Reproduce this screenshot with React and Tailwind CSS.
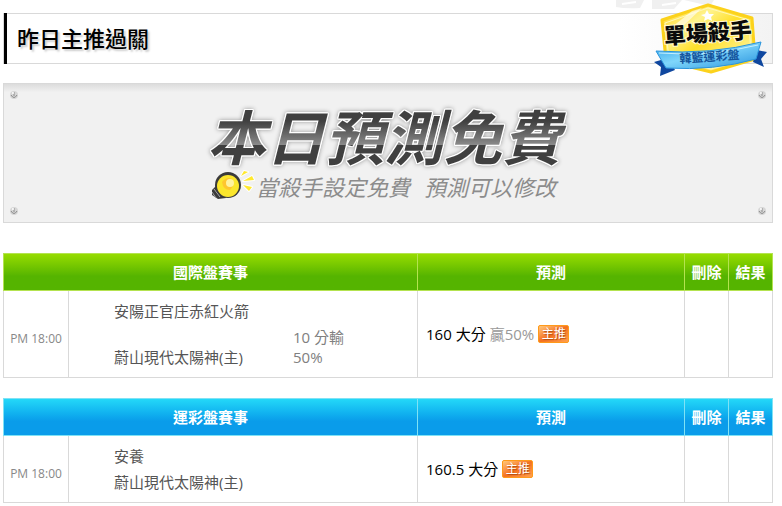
import React from 'react';
import clsx from 'clsx';

const games = [
  {
    id: 'international',
    title: '國際盤賽事',
    theme: 'green',
    time: 'PM 18:00',
    away: '安陽正官庄赤紅火箭',
    home: '蔚山現代太陽神(主)',
    odds: ['10 分輸', '50%'],
    pick: '160 大分',
    rate: '贏50%',
  },
  {
    id: 'lottery',
    title: '運彩盤賽事',
    theme: 'blue',
    time: 'PM 18:00',
    away: '安養',
    home: '蔚山現代太陽神(主)',
    odds: [],
    pick: '160.5 大分',
    rate: '',
  },
];

const headThemes = {
  green: 'bg-linear-to-b from-[#96dc00] via-[#55b400] via-60% to-[#55b400]',
  blue: 'bg-linear-to-b from-[#24d8f8] via-[#0a9cea] via-60% to-[#0a9cea]',
};

const borderThemes = {
  green: 'border-[#b4e350]',
  blue: 'border-[#7fe2f5]',
};

const KillerBadge = () => (
  <svg className="w-[114px] h-[76px]" viewBox="0 0 114 76" role="img" aria-label="單場殺手 韓籃運彩盤">
    <defs>
      <linearGradient id="gold" x1="0" y1="0" x2="1" y2="1">
        <stop offset="0" stopColor="#ffd21a" />
        <stop offset="0.3" stopColor="#fff38c" />
        <stop offset="0.5" stopColor="#ffe02a" />
        <stop offset="0.8" stopColor="#fff08a" />
        <stop offset="1" stopColor="#f5bd00" />
      </linearGradient>
      <linearGradient id="ribbon" x1="0" y1="0" x2="1" y2="1">
        <stop offset="0" stopColor="#2f9fe4" />
        <stop offset="0.45" stopColor="#7fd6fb" />
        <stop offset="1" stopColor="#2590dc" />
      </linearGradient>
    </defs>
    <path d="M54 4 L98 17 L101 58 L57 71 L12 60 L8 19 Z" fill="url(#gold)" stroke="#fcd21c" strokeWidth="3" strokeLinejoin="round" />
    <path d="M54 7 L95 19 L97 56 L57 68 L15 58 L11 22 Z" fill="none" stroke="#fff8b8" strokeWidth="1" />
    <path d="M38 10 L48 7 L24 30 L13 30 Z" fill="#fff" opacity="0.6" />
    <path d="M53 9 L55 13 L60 13 L57 16 L58 20 L54 18 L50 20 L51 16 L47 14 L51 13 Z" fill="#fff" />
    <path d="M0 61 L14 57 L21 69 L6 75 L7 66 Z" fill="#0f479f" />
    <path d="M113 51 L103 49 L99 61 L110 66 L107 58 Z" fill="#0f479f" />
    <path d="M2 50 Q56 54 107 41 L102 58 Q60 70 12 67 Z" fill="url(#ribbon)" stroke="#2a94dc" strokeWidth="1" />
    <path d="M5 52 Q56 56 104 44" fill="none" stroke="#c5efff" strokeWidth="1" />
    <g transform="rotate(-4 55 35)" textAnchor="middle" fontFamily="'Noto Sans CJK TC', sans-serif">
      <text x="54" y="40" fontSize="22" fontWeight="900" fill="#0a0a0a" stroke="#fff9d0" strokeWidth="2" paintOrder="stroke">
        單場殺手
      </text>
      <text x="54" y="60" fontSize="12" fontWeight="700" fill="#14549c">
        韓籃運彩盤
      </text>
    </g>
  </svg>
);

const Bulb = () => (
  <svg className="w-11 h-[30px] shrink-0" viewBox="0 0 44 30" aria-hidden="true">
    <path d="M6 14 L0 20 L0 25 L6 29 L14 28 Z" fill="#3a3a3a" />
    <path d="M2 19 L8 27 M0 22 L4 28" stroke="#a8a8a8" strokeWidth="1" />
    <circle cx="16" cy="15" r="13" fill="#3a3a3a" />
    <circle cx="16" cy="16" r="11" fill="#fbe62c" />
    <path d="M10 12 Q15 6 20 9 Q24 14 18 20 Q11 20 10 12 Z" fill="#ffc62e" />
    <circle cx="18" cy="13" r="4" fill="#fff3a0" />
    <g fill="#ffe92e" stroke="#fff" strokeWidth="2" strokeLinejoin="round" paintOrder="stroke">
      <path d="M29 6 L32 1 L36 2 Z" />
      <path d="M31 11 L40 6 L42 10 Z" />
      <path d="M31 15 L40 17 L37 21 Z" />
    </g>
  </svg>
);

const Screw = () => (
  <svg className="w-2 h-2" viewBox="0 0 8 8" aria-hidden="true">
    <circle cx="4" cy="4" r="4" fill="#d6d6d6" />
    <path d="M4 1 V5 M1 4 Q4 9 7 4" fill="none" stroke="#8c8c8c" strokeWidth="1" />
    <circle cx="3" cy="2" r="1" fill="#fff" />
  </svg>
);

const GameTable = ({ game }) => {
  const th = clsx('border p-0 text-[15px] font-bold', borderThemes[game.theme]);
  const td = 'border border-[#d9d9d9]';

  return (
    <table className="w-full table-fixed border-collapse">
      <colgroup>
        <col className="w-[65px]" />
        <col />
        <col className="w-[267px]" />
        <col className="w-11" />
        <col className="w-11" />
      </colgroup>
      <thead>
        <tr className={clsx('h-[37px] text-white', headThemes[game.theme])}>
          <th colSpan={2} className={th}>{game.title}</th>
          <th className={th}>預測</th>
          <th className={th}>刪除</th>
          <th className={th}>結果</th>
        </tr>
      </thead>
      <tbody>
        <tr>
          <td className={clsx(td, 'pt-[10px] text-center text-xs text-[#888]')}>{game.time}</td>
          <td className={clsx(td, 'py-[10px] pl-[45px] text-[15px] leading-5 text-[#555]')}>
            <div className="grid grid-cols-[179px_1fr] gap-y-[6px]">
              <p className="col-span-2">{game.away}</p>
              <p className="self-end">{game.home}</p>
              <div className="text-[#808080]">
                {game.odds.map((line) => (
                  <p key={line}>{line}</p>
                ))}
              </div>
            </div>
          </td>
          <td className={clsx(td, 'pl-2 text-[15px] leading-5')}>
            <div className="flex items-center gap-1">
              <span className="text-black">{game.pick}</span>
              {game.rate && <span className="text-[#999]">{game.rate}</span>}
              <span className="flex h-[18px] w-[31px] items-center justify-center rounded-xs border border-[#ff9a1a] bg-linear-to-br from-[#ffc878] via-[#f4711f] to-[#ffa04d] text-xs text-white [text-shadow:1px_1px_1px_#b04a10]">
                主推
              </span>
            </div>
          </td>
          <td className={td}></td>
          <td className={td}></td>
        </tr>
      </tbody>
    </table>
  );
};

const App = () => {
  return (
    <main className="bg-white pt-[13px] pr-[9px] pb-1 pl-[3px] font-['Open_Sans','Noto_Sans_CJK_TC',sans-serif]">
      {/* Heading */}
      <header className="relative flex h-[51px] items-center border border-[#d9d9d9] bg-linear-to-r from-white from-80% to-[#f3f3f3]">
        <div className="h-[51px] w-[3px] bg-black"></div>
        <h1 className="ml-[10px] text-[22px] font-medium text-black [text-shadow:2px_2px_2px_#ccc]">昨日主推過關</h1>
        <svg className="absolute -top-[14px] right-[46px] h-[10px] w-[110px]" viewBox="0 0 110 10" aria-hidden="true">
          <path d="M0 0 H28 L24 8 Q10 9 0 7 Z M36 0 H66 L58 9 H36 Z M68 0 H98 L94 6 Z" fill="#f0f0f0" />
          <path d="M6 4 L20 2 M46 5 L60 3" stroke="#fff" strokeWidth="2" />
        </svg>
        <div className="absolute -top-[13px] right-1">
          <KillerBadge />
        </div>
      </header>

      {/* Banner */}
      <section className="mt-[19px] flex h-[140px] justify-between border border-[#d9d9d9] bg-linear-to-b from-[#dcdcdc] to-[#f1f1f1] to-6% px-[6px] py-[7px]">
        <div className="flex flex-col justify-between">
          <Screw />
          <Screw />
        </div>
        <div className="flex flex-col items-center pt-[14px] pr-2">
          <h2 className="bg-linear-to-b from-[#404040] from-25% via-[#8a8a8a] via-62% to-[#404040] to-63% bg-clip-text px-2 text-[59px] leading-[64px] font-bold text-transparent italic [filter:drop-shadow(1px_0_0_#fff)_drop-shadow(-1px_0_0_#fff)_drop-shadow(0_1px_0_#fff)_drop-shadow(0_-1px_0_#fff)_drop-shadow(0_0_2px_#999)]">
            本日預測免費
          </h2>
          <div className="flex items-center text-[22px] leading-7 text-[#8c8c8c] italic">
            <Bulb />
            <p className="flex gap-[14px] pt-1">
              <span>當殺手設定免費</span>
              <span>預測可以修改</span>
            </p>
          </div>
        </div>
        <div className="flex flex-col justify-between">
          <Screw />
          <Screw />
        </div>
      </section>

      {/* Game lists */}
      <div className="mt-[30px] flex flex-col gap-5">
        {games.map((game) => (
          <GameTable key={game.id} game={game} />
        ))}
      </div>
    </main>
  );
};

export default App;
